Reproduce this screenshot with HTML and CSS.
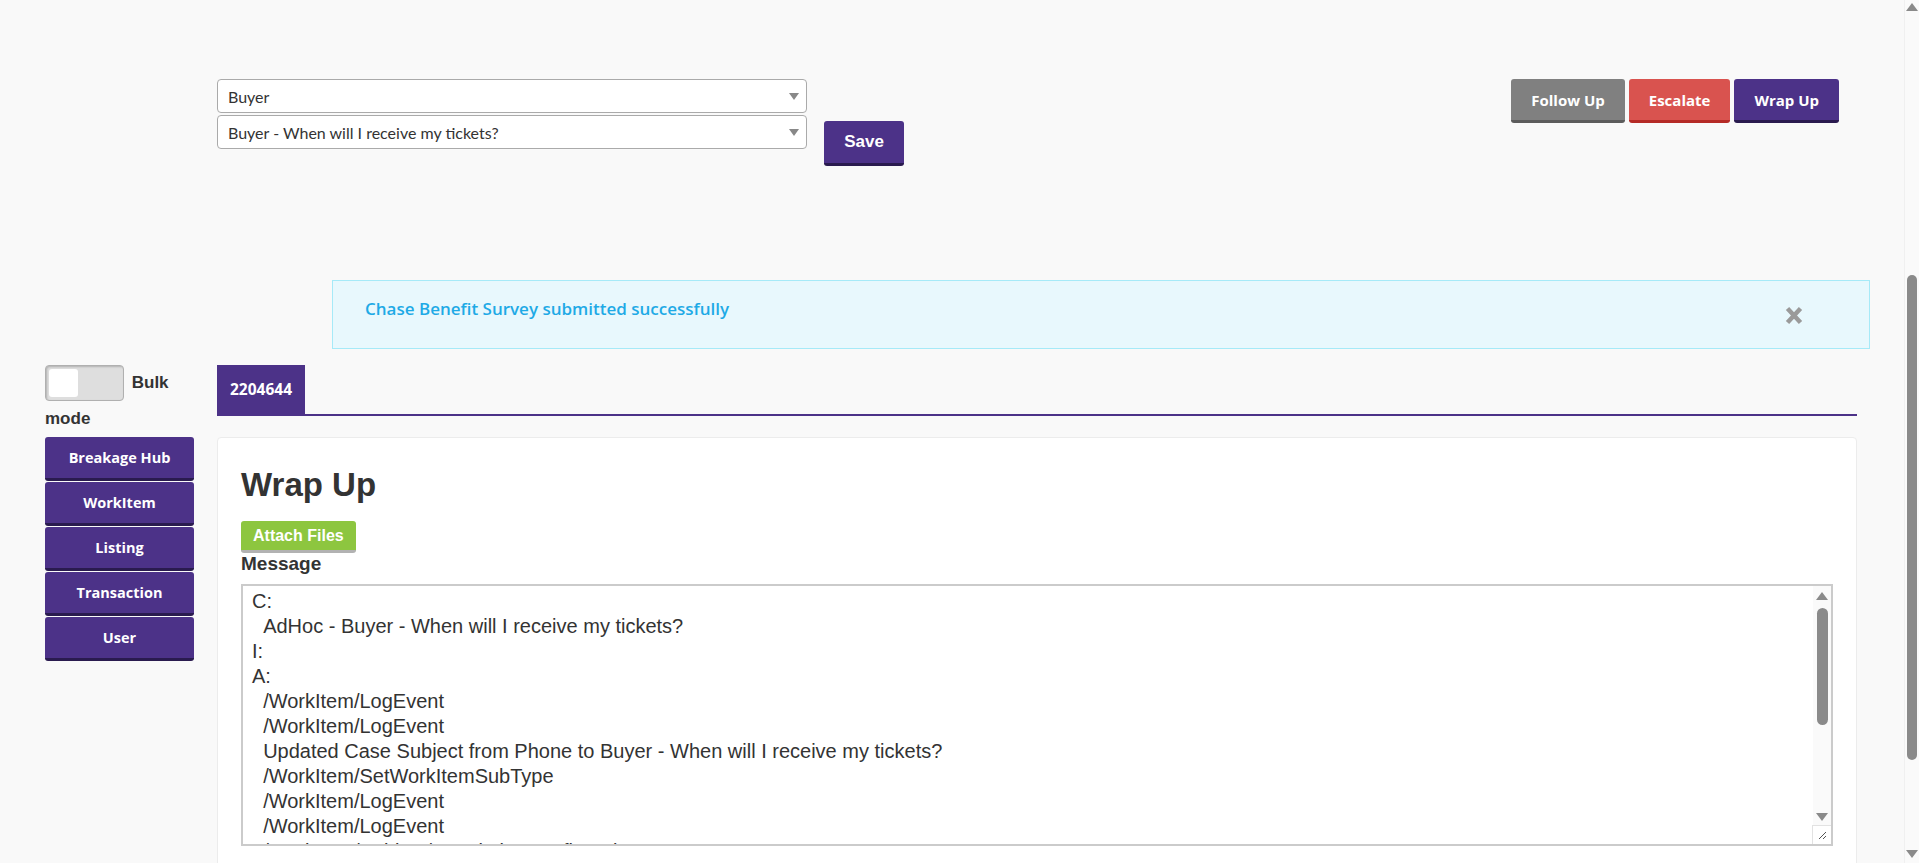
FILE: index.html
```html
<!DOCTYPE html>
<html lang="en">
<head>
    <meta charset="UTF-8">
    <meta name="viewport" content="width=device-width, initial-scale=1.0">
    <title>Wrap Up</title>
    <link rel="stylesheet" href="styles.css">
</head>
<body>

<div class="top-bar">
    <div class="case-form">
        <div class="selects">
            <div class="select-wrap">
                <select class="select">
                    <option>Buyer</option>
                </select>
            </div>
            <div class="select-wrap">
                <select class="select">
                    <option>Buyer - When will I receive my tickets?</option>
                </select>
            </div>
        </div>
        <button class="btn-save">Save</button>
    </div>
    <div class="actions">
        <button class="btn btn-grey">Follow Up</button>
        <button class="btn btn-red">Escalate</button>
        <button class="btn btn-purple">Wrap Up</button>
    </div>
</div>

<div class="alert">
    <span class="alert-text">Chase Benefit Survey submitted successfully</span>
    <button class="alert-close" aria-label="Close">
        <svg width="18" height="19" viewBox="0 0 18 19">
            <path d="M2.5 2.5 L15.5 16.5 M15.5 2.5 L2.5 16.5" stroke="#9a9a9a" stroke-width="4.5"/>
        </svg>
    </button>
</div>

<div class="workspace">
    <aside class="sidebar">
        <div class="bulk">
            <span class="toggle"><span class="toggle-knob"></span></span> Bulk mode
        </div>
        <button class="side-btn">Breakage Hub</button>
        <button class="side-btn">WorkItem</button>
        <button class="side-btn">Listing</button>
        <button class="side-btn">Transaction</button>
        <button class="side-btn">User</button>
    </aside>

    <main class="content">
        <div class="tabs">
            <span class="tab">2204644</span>
        </div>

        <div class="card">
            <h1 class="card-title">Wrap Up</h1>
            <button class="btn-attach">Attach Files</button>
            <label class="field-label" for="message">Message</label>
            <div class="message-wrap">
                <textarea id="message" class="message">
C:
  AdHoc - Buyer - When will I receive my tickets?
I:
A:
  /WorkItem/LogEvent
  /WorkItem/LogEvent
  Updated Case Subject from Phone to Buyer - When will I receive my tickets?
  /WorkItem/SetWorkItemSubType
  /WorkItem/LogEvent
  /WorkItem/LogEvent
  /WorkItem/Subject/ResolutionConfirmation
  /WorkItem/LogEvent
  /WorkItem/LogEvent
  /WorkItem/WrapUp
R:
</textarea>
                <div class="scrollbar scrollbar-inner">
                    <span class="arrow-up"></span>
                    <span class="thumb"></span>
                    <span class="arrow-down"></span>
                </div>
                <div class="resize-grip">
                    <svg width="10" height="10" viewBox="0 0 10 10">
                        <path d="M9 2 L2 9 M9 6 L6 9" stroke="#555" stroke-width="1"/>
                    </svg>
                </div>
            </div>
        </div>
    </main>
</div>

<div class="scrollbar scrollbar-page">
    <span class="arrow-up"></span>
    <span class="thumb"></span>
    <span class="arrow-down"></span>
</div>

</body>
</html>
```

FILE: styles.css
```css
body {
    margin: 0;
    background-color: #f9f9f9;
    font-family: 'Liberation Sans', Arial, sans-serif;
    color: #333;
}

button {
    cursor: pointer;
}

/* Top bar */
.top-bar {
    display: flex;
    justify-content: space-between;
    align-items: flex-start;
    padding: 79px 80px 0 217px;
}

.case-form {
    display: flex;
    align-items: flex-start;
}

.selects {
    display: flex;
    flex-direction: column;
    gap: 2px;
    width: 590px;
}

.select-wrap {
    position: relative;
}

.select-wrap::after {
    content: "";
    position: absolute;
    right: 8px;
    top: 14px;
    border-left: 5px solid transparent;
    border-right: 5px solid transparent;
    border-top: 7px solid #888;
    pointer-events: none;
}

.select {
    appearance: none;
    -webkit-appearance: none;
    width: 100%;
    height: 34px;
    padding: 0 10px;
    border: 1px solid #aaa;
    border-radius: 4px;
    background-color: #fff;
    font-family: 'Lato', sans-serif;
    font-size: 16px;
    color: #333;
}

.btn-save {
    margin: 42px 0 0 17px;
    width: 80px;
    height: 45px;
    border: none;
    border-bottom: 3px solid #2a1b4f;
    border-radius: 3px;
    background-color: #4c3288;
    color: #fff;
    font-family: 'Liberation Sans', Arial, sans-serif;
    font-size: 17px;
    font-weight: bold;
}

.actions {
    display: flex;
    gap: 4px;
}

.btn {
    height: 44px;
    padding: 0 20px;
    border: none;
    border-radius: 3px;
    color: #fff;
    font-family: 'Open Sans', sans-serif;
    font-size: 15px;
    font-weight: bold;
}

.btn-grey {
    background-color: #808080;
    border-bottom: 3px solid #5c5c5c;
}

.btn-red {
    background-color: #d9534f;
    border-bottom: 3px solid #b52a26;
}

.btn-purple {
    background-color: #4c3288;
    border-bottom: 3px solid #2a1b4f;
}

/* Alert */
.alert {
    display: flex;
    justify-content: space-between;
    align-items: flex-start;
    box-sizing: border-box;
    height: 69px;
    margin: 114px 49px 0 332px;
    padding: 16px 66px 0 32px;
    border: 1px solid #a6eaf8;
    background-color: #e8f8fd;
}

.alert-text {
    font-family: 'Open Sans', sans-serif;
    font-size: 17px;
    font-weight: 600;
    color: #1eaae6;
}

.alert-close {
    margin-top: 9px;
    padding: 0;
    border: none;
    background: none;
    line-height: 0;
}

/* Workspace */
.workspace {
    display: flex;
    align-items: flex-start;
    margin-top: 16px;
    padding-bottom: 40px;
}

.sidebar {
    flex: 0 0 149px;
    margin-left: 45px;
}

.bulk {
    font-size: 17px;
    font-weight: bold;
    line-height: 36px;
    color: #333;
}

.toggle {
    display: inline-block;
    vertical-align: top;
    box-sizing: border-box;
    width: 79px;
    height: 36px;
    margin-right: 3px;
    padding: 3px;
    border: 1px solid #b0b0b0;
    border-radius: 4px;
    background-color: #dedede;
    box-shadow: inset 1px 1px 2px rgba(0, 0, 0, 0.2);
}

.toggle-knob {
    display: block;
    width: 29px;
    height: 28px;
    border-radius: 3px;
    background-color: #fff;
}

.side-btn {
    display: block;
    width: 149px;
    height: 44px;
    margin-bottom: 1px;
    padding: 0;
    border: none;
    border-bottom: 3px solid #2a1b4f;
    border-radius: 3px;
    background-color: #4c3288;
    color: #fff;
    font-family: 'Open Sans', sans-serif;
    font-size: 14.5px;
    font-weight: bold;
}

.content {
    flex: 1;
    margin: 0 62px 0 23px;
}

.tabs {
    display: flex;
    border-bottom: 2px solid #4c3288;
}

.tab {
    display: block;
    height: 49px;
    padding: 0 13px;
    background-color: #4c3288;
    color: #fff;
    font-family: 'Open Sans', sans-serif;
    font-size: 15.5px;
    font-weight: bold;
    line-height: 49px;
}

/* Card */
.card {
    margin-top: 21px;
    padding: 28px 23px 40px;
    border: 1px solid #ececec;
    border-radius: 4px;
    background-color: #fff;
}

.card-title {
    margin: 0 0 17px;
    font-size: 33px;
    font-weight: bold;
    line-height: 38px;
    color: #333;
}

.btn-attach {
    display: block;
    height: 32px;
    padding: 0 12px;
    border: none;
    border-bottom: 3px solid #b2b2b2;
    border-radius: 3px;
    background-color: #8dc63f;
    color: #fff;
    font-family: 'Liberation Sans', Arial, sans-serif;
    font-size: 16px;
    font-weight: bold;
}

.field-label {
    display: block;
    margin-bottom: 9px;
    font-size: 19px;
    font-weight: bold;
    line-height: 22px;
}

.message-wrap {
    position: relative;
}

.message {
    display: block;
    box-sizing: border-box;
    width: 100%;
    height: 262px;
    padding: 3px 30px 0 9px;
    border: 2px solid #cbcbcb;
    font-family: 'Liberation Sans', Arial, sans-serif;
    font-size: 20px;
    line-height: 25px;
    color: #333;
    resize: none;
    overflow: hidden;
}

/* Scrollbars drawn over the textarea and the page */
.scrollbar {
    display: flex;
    flex-direction: column;
    align-items: center;
    box-sizing: border-box;
    background-color: #fafafa;
}

.scrollbar-inner {
    position: absolute;
    top: 2px;
    right: 2px;
    bottom: 21px;
    width: 18px;
    padding-top: 6px;
}

.scrollbar-page {
    position: fixed;
    top: 0;
    right: 0;
    bottom: 0;
    width: 15px;
    padding-top: 3px;
    border-left: 1px solid #f0f0f0;
}

.arrow-up,
.arrow-down {
    width: 0;
    height: 0;
    border-left: 6px solid transparent;
    border-right: 6px solid transparent;
}

.arrow-up {
    border-bottom: 8px solid #8a8a8a;
}

.arrow-down {
    border-top: 8px solid #8a8a8a;
}

.thumb {
    width: 11px;
    border-radius: 6px;
    background-color: #8a8a8a;
}

.scrollbar-inner .thumb {
    height: 117px;
    margin: 8px 0 auto;
}

.scrollbar-inner .arrow-down {
    margin-bottom: 4px;
}

.scrollbar-page .thumb {
    width: 10px;
    height: 485px;
    margin: 264px 0 auto;
}

.scrollbar-page .arrow-down {
    margin-bottom: 5px;
}

.resize-grip {
    position: absolute;
    right: 2px;
    bottom: 2px;
    display: flex;
    align-items: center;
    justify-content: center;
    box-sizing: border-box;
    width: 19px;
    height: 19px;
    border-top: 1px solid #e2e2e2;
    border-left: 1px solid #e2e2e2;
    background-color: #fff;
}
```
